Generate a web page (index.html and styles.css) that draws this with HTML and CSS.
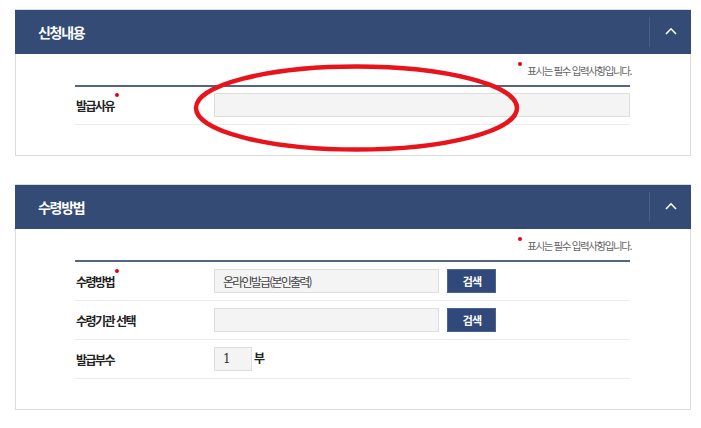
FILE: index.html
```html
<!DOCTYPE html>
<html lang="ko">
<head>
<meta charset="utf-8">
<title>신청내용</title>
<link rel="stylesheet" href="styles.css">
</head>
<body>
<div class="page">
  <section class="panel">
    <div class="panel-head">
      <h2 class="panel-title">신청내용</h2>
      <button class="toggle" type="button" aria-label="접기">
        <svg width="12" height="8" viewBox="0 0 12 8"><path d="M1 7 L6 1.8 L11 7" fill="none" stroke="#fff" stroke-width="1.6"/></svg>
      </button>
    </div>
    <div class="panel-body">
      <p class="req-note"><span class="dot"></span>표시는 필수 입력사항입니다.</p>
      <div class="form-table">
        <div class="form-row first-only">
          <span class="label req">발급사유</span>
          <div class="field"><span class="input wide"></span></div>
        </div>
      </div>
    </div>
  </section>

  <section class="panel">
    <div class="panel-head">
      <h2 class="panel-title">수령방법</h2>
      <button class="toggle" type="button" aria-label="접기">
        <svg width="12" height="8" viewBox="0 0 12 8"><path d="M1 7 L6 1.8 L11 7" fill="none" stroke="#fff" stroke-width="1.6"/></svg>
      </button>
    </div>
    <div class="panel-body">
      <p class="req-note"><span class="dot"></span>표시는 필수 입력사항입니다.</p>
      <div class="form-table">
        <div class="form-row">
          <span class="label req">수령방법</span>
          <div class="field"><span class="input mid">온라인발급(본인출력)</span><button class="btn" type="button">검색</button></div>
        </div>
        <div class="form-row">
          <span class="label">수령기관 선택</span>
          <div class="field"><span class="input mid"></span><button class="btn" type="button">검색</button></div>
        </div>
        <div class="form-row">
          <span class="label">발급부수</span>
          <div class="field"><span class="input small">1</span><span class="unit">부</span></div>
        </div>
      </div>
    </div>
  </section>
</div>
<svg class="annotation" width="701" height="428" viewBox="0 0 701 428">
  <ellipse cx="356.5" cy="108" rx="160.5" ry="41.5" fill="none" stroke="#e8141c" stroke-width="4.5"/>
</svg>
</body>
</html>
```

FILE: styles.css
```css
* { box-sizing: border-box; }
html, body { margin: 0; padding: 0; background: #fff; }
body {
  font-family: "Noto Sans CJK KR", "Noto Sans", sans-serif;
  color: #222;
  position: relative;
  width: 701px;
  height: 428px;
  overflow: hidden;
}
.page {
  padding: 9px 0 0 15px;
  display: flex;
  flex-direction: column;
  gap: 28px;
}
.panel {
  width: 676px;
  border: 1px solid #dcdcdc;
}
.panel-head {
  margin: 0 -1px;
  height: 44px;
  background: #344b76;
  display: flex;
  align-items: center;
  justify-content: space-between;
  padding-left: 23px;
}
.panel-title {
  margin: 0;
  font-size: 14px;
  font-weight: 700;
  color: #fff;
  letter-spacing: -1.3px;
  line-height: 1;
}
.toggle {
  width: 42px;
  height: 30px;
  border: 0;
  border-left: 1px solid #4b5f86;
  background: transparent;
  padding: 0 0 2px 1px;
  display: flex;
  align-items: center;
  justify-content: center;
}
.panel-body {
  padding: 0 60px 30px 59px;
}
.req-note {
  margin: 0;
  height: 31px;
  display: flex;
  align-items: center;
  justify-content: flex-end;
  font-size: 10.5px;
  color: #666;
  letter-spacing: -1.4px;
  margin-right: -1px;
  padding-top: 1px;
}
.dot {
  display: inline-block;
  width: 4px;
  height: 4px;
  border-radius: 50%;
  background: #e60012;
  margin-right: 5px;
  position: relative;
  top: -6px;
}
.form-table {
  border-top: 2px solid #56657f;
}
.form-row {
  display: grid;
  grid-template-columns: 139px 1fr;
  align-items: center;
  padding: 7px 0 7px;
  border-bottom: 1px solid #ececec;
}
.form-row.first-only {
  padding: 6px 0 7px;
}
.label {
  font-size: 12px;
  font-weight: 700;
  color: #222;
  letter-spacing: -1.5px;
  padding-left: 1px;
  position: relative;
  justify-self: start;
}
.label.req::after {
  content: "";
  position: absolute;
  right: -5px;
  top: -4px;
  width: 4px;
  height: 4px;
  border-radius: 50%;
  background: #e60012;
}
.field {
  display: flex;
  align-items: center;
  gap: 8px;
}
.input {
  height: 24px;
  background: #f4f4f4;
  border: 1px solid #dedede;
  font-size: 12px;
  color: #444;
  letter-spacing: -1.8px;
  padding-left: 8px;
  display: flex;
  align-items: center;
}
.input.wide { width: 416px; }
.input.mid { width: 225px; }
.input.small { width: 38px; letter-spacing: 0; font-family: "DejaVu Serif", serif; font-size: 12px; color: #333; }
.btn {
  width: 49px;
  height: 24px;
  background: #30497a;
  border: 1px solid #4d648f;
  color: #fff;
  font-family: "Noto Sans CJK KR", sans-serif;
  font-size: 11px;
  font-weight: 700;
  letter-spacing: -0.8px;
  padding: 0 0 0 1px;
}
.unit {
  font-size: 12px;
  font-weight: 700;
  margin-left: -6px;
  position: relative;
  top: -2px;
}
.annotation {
  position: absolute;
  left: 0;
  top: 0;
  pointer-events: none;
}
```
